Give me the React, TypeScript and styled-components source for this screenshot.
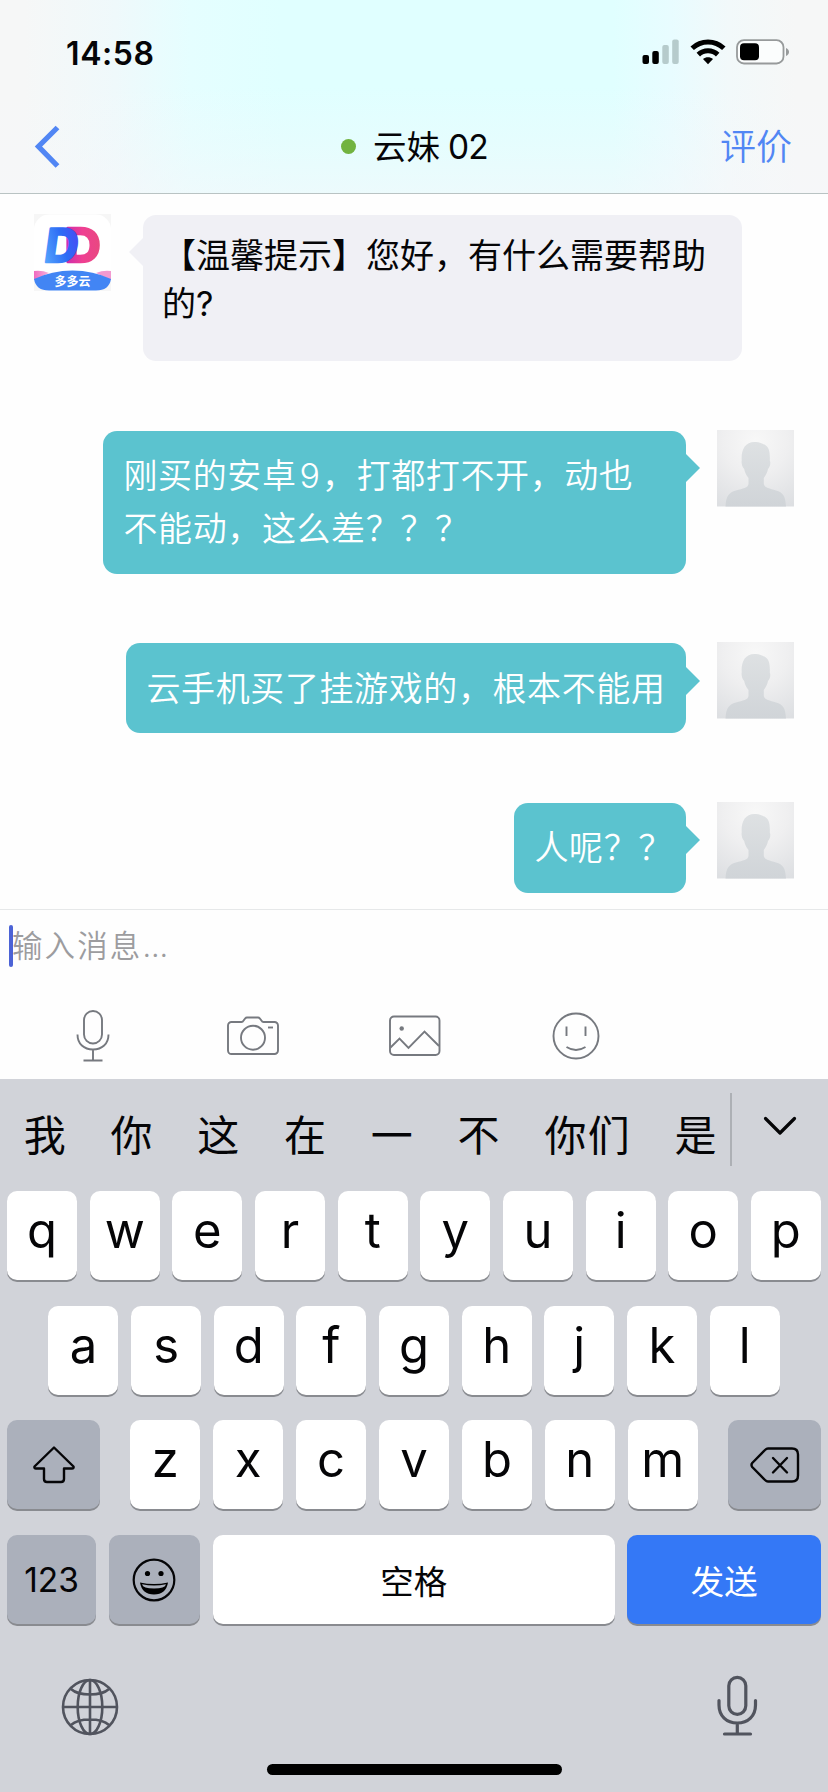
import React from 'react';
import styled, { createGlobalStyle, css } from 'styled-components';

const Global = createGlobalStyle`
  * { box-sizing: border-box; }
  html, body { margin: 0; padding: 0; background: #fff; }
  body { font-family: Inter, "Noto Sans CJK SC", sans-serif; color: #050507; }
  svg { display: block; }
`;

const Screen = styled.div`
  width: 828px;
  height: 1792px;
  overflow: hidden;
  display: flex;
  flex-direction: column;
  background: #fefefe;
`;

/* ---------- header ---------- */

const Header = styled.header`
  flex: none;
  height: 194px;
  border-bottom: 1px solid #b9c3c3;
  background:
    linear-gradient(to bottom, rgba(246, 247, 250, 0) 45%, rgba(246, 247, 250, 0.25) 75%, rgba(246, 247, 250, 0.55) 100%),
    linear-gradient(to right, #f6f7f7 3%, #eff9fb 14%, #e5feff 23%, #e0ffff 34%, #e0ffff 74%, #e8fcff 81%, #f2f9fa 88%, #f6f7f7 96%);
`;

const StatusBar = styled.div`
  height: 100px;
  padding: 0 38px 0 66px;
  display: flex;
  align-items: center;
  justify-content: space-between;
`;

const Clock = styled.span`
  font-size: 32px;
  font-weight: 600;
  line-height: 40px;
  padding-top: 7px;
  letter-spacing: 0.6px;
`;

const StatusIcons = styled.div`
  display: flex;
  align-items: center;
  gap: 10px;
  padding-top: 4px;
`;

const NavBar = styled.div`
  height: 93px;
  padding: 0 36px 0 34px;
  display: grid;
  grid-template-columns: 120px 1fr 120px;
  align-items: center;
`;

const Title = styled.h1`
  margin: 0;
  display: flex;
  align-items: center;
  justify-content: center;
  gap: 17px;
  font-size: 33.5px;
  font-weight: 400;
  line-height: 44px;
  padding-left: 3px;
`;

const TitleText = styled.span`
  word-spacing: -1.5px;
`;

const TitleNum = styled.span`
  letter-spacing: -0.8px;
`;

const OnlineDot = styled.i`
  width: 15px;
  height: 15px;
  border-radius: 50%;
  background: #72b340;
`;

const RateLink = styled.span`
  justify-self: end;
  font-size: 36px;
  font-weight: 350;
  line-height: 44px;
  color: #5186f4;
`;

/* ---------- conversation ---------- */

const Chat = styled.main`
  flex: none;
  height: 715px;
  padding: 21px 34px 0;
  display: flex;
  flex-direction: column;
  gap: 69.5px;
  overflow: hidden;
`;

const Row = styled.div<{ $mine?: boolean }>`
  display: flex;
  flex: none;
  align-items: flex-start;
  gap: ${p => (p.$mine ? '31px' : '32px')};
  justify-content: ${p => (p.$mine ? 'flex-end' : 'flex-start')};
`;

const AvatarBox = styled.div`
  width: 77px;
  height: 77px;
  margin-top: -1px;
  flex: none;
`;

const Bubble = styled.div<{ $mine?: boolean; $w: number }>`
  position: relative;
  width: ${p => p.$w}px;
  white-space: pre;
  font-size: 34px;
  &::after {
    content: '';
    position: absolute;
    border: 14px solid transparent;
  }
  ${p =>
    p.$mine
      ? css`
          padding: 18.5px 20.5px;
          border-radius: 14px;
          background: #5bc3cf;
          color: #fff;
          font-weight: 350;
          letter-spacing: 0.6px;
          line-height: 53px;
          &::after {
            left: 100%;
            top: 23.5px;
            border-left-color: #5bc3cf;
            border-right-width: 0;
          }
        `
      : css`
          height: 146px;
          padding: 17px 19px;
          border-radius: 13px;
          background: #f0f0f5;
          line-height: 48px;
          &::after {
            right: 100%;
            top: 23px;
            border-right-color: #f0f0f5;
            border-left-width: 0;
          }
        `}
`;

const Num = styled.span`
  margin: 0 1.5px 0 3px;
`;

/* ---------- composer ---------- */

const Composer = styled.section`
  flex: none;
  height: 170px;
  border-top: 1.5px solid #e6e8e9;
  display: flex;
  flex-direction: column;
`;

const InputLine = styled.div`
  flex: none;
  height: 72px;
  padding-left: 9px;
  display: flex;
  align-items: center;
`;

const Caret = styled.i`
  width: 4px;
  height: 42px;
  border-radius: 2px;
  background: #4c63d6;
`;

const Placeholder = styled.span`
  font-size: 30.5px;
  font-weight: 350;
  letter-spacing: 2.1px;
  line-height: 42px;
  color: #9c9c9f;
  margin-left: -1px;
`;

const Dots = styled.span`
  letter-spacing: 0;
`;

const Tools = styled.div`
  flex: 1;
  display: grid;
  grid-template-columns: repeat(5, 161px);
  padding: 11px 0 0 12px;
  align-items: center;
  justify-items: center;
`;

/* ---------- keyboard ---------- */

const Keyboard = styled.section`
  flex: 1;
  background: #d1d3d9;
  display: flex;
  flex-direction: column;
`;

const Candidates = styled.div`
  height: 112px;
  display: flex;
  align-items: center;
`;

const CandidateList = styled.div`
  flex: none;
  width: 730px;
  padding: 2px 0 0 2px;
  display: flex;
`;

const Candidate = styled.span`
  flex: none;
  white-space: nowrap;
  padding: 0 21.7px;
  font-size: 42px;
  letter-spacing: 1.4px;
  line-height: 56px;
`;

const Divider = styled.i`
  width: 2px;
  height: 73px;
  margin-top: -12px;
  background: #adb0b5;
`;

const Expand = styled.div`
  flex: 1;
  display: flex;
  justify-content: center;
  padding-bottom: 18px;
`;

const Keys = styled.div`
  display: flex;
  flex-direction: column;
  gap: 25.7px;
  padding: 0 7px;
`;

const KeyRow = styled.div<{ $split?: boolean }>`
  display: flex;
  justify-content: ${p => (p.$split ? 'space-between' : 'center')};
  gap: 12.65px;
`;

const KeyGroup = styled.div`
  display: flex;
  gap: 12.9px;
`;

type Tone = 'light' | 'dark' | 'send';
const toneColor: Record<Tone, string> = { light: '#fff', dark: '#abb0bb', send: '#3478f6' };

const Key = styled.div<{ $w?: number; $tone?: Tone; $small?: boolean }>`
  width: ${p => p.$w ?? 70}px;
  height: 89px;
  border-radius: 10px;
  background: ${p => toneColor[p.$tone ?? 'light']};
  color: ${p => (p.$tone === 'send' ? '#fff' : '#050507')};
  box-shadow: 0 2px 0 #898b90;
  display: flex;
  align-items: center;
  justify-content: center;
  font-size: ${p => (p.$small ? 33.5 : 49)}px;
  line-height: 60px;
  padding-bottom: ${p => (p.$small ? 0 : 9)}px;
`;

const KeyLabel = styled.span`
  padding-top: 4px;
`;

const BottomBar = styled.div`
  height: 136px;
  padding: 51px 70px 0 61px;
  display: flex;
  align-items: flex-start;
  justify-content: space-between;
`;

const GlobeSlot = styled.div`
  padding-top: 3px;
`;

const HomeIndicator = styled.div`
  width: 295px;
  height: 11px;
  border-radius: 6px;
  background: #000;
  margin: 4px 0 0 267px;
`;

/* ---------- drawings ---------- */

const Signal = () => (
  <svg width="38" height="26" viewBox="0 0 38 26">
    <rect x="0.5" y="16" width="6.5" height="9" rx="2" />
    <rect x="10.3" y="12" width="6.5" height="13" rx="2" />
    <rect x="20.3" y="6" width="6.5" height="19" rx="2" fill="#b6cbcc" />
    <rect x="30.2" y="0.5" width="6.5" height="24.5" rx="2" fill="#b6cbcc" />
  </svg>
);

const Wifi = () => (
  <svg width="36" height="26" viewBox="0 0 36 26" fill="none" stroke="#000" strokeWidth="5">
    <path d="M2.2 9.2a23 23 0 0 1 31.6 0" />
    <path d="M8.3 15.6a14 14 0 0 1 19.4 0" />
    <path d="M18 25.2l-5-5.2c2.8-2.5 7.2-2.5 10 0z" fill="#000" stroke="none" />
  </svg>
);

const Battery = () => (
  <svg width="54" height="26" viewBox="0 0 54 26">
    <rect x="1" y="1.2" width="46.5" height="23.3" rx="7" fill="#fbfdfd" stroke="#979a9b" strokeWidth="1.8" />
    <rect x="4" y="4.2" width="19" height="17" rx="4" />
    <path d="M50 9c4 1.5 4 6.5 0 8z" fill="#979a9b" />
  </svg>
);

const Back = () => (
  <svg width="27" height="44" viewBox="0 0 27 44" fill="none" stroke="#5186f4" strokeWidth="5.3">
    <path d="M23.5 2.5L4.5 21.5 23.5 41" />
  </svg>
);

const BrandAvatar = () => (
  <svg width="77" height="77" viewBox="0 0 77 77">
    <defs>
      <linearGradient id="blueD" x1="0" y1="1" x2="1" y2="0.3">
        <stop offset="0" stopColor="#5fb4ff" />
        <stop offset="0.6" stopColor="#2d6cf5" />
        <stop offset="1" stopColor="#4a48f5" />
      </linearGradient>
      <linearGradient id="pinkD" x1="0" y1="0" x2="1" y2="0">
        <stop offset="0" stopColor="#c92bb0" />
        <stop offset="0.5" stopColor="#ef3f92" />
        <stop offset="1" stopColor="#e8497f" />
      </linearGradient>
      <linearGradient id="flap" x1="0" y1="0" x2="1" y2="0">
        <stop offset="0" stopColor="#f06ac0" />
        <stop offset="1" stopColor="#f7b3dc" />
      </linearGradient>
    </defs>
    <rect width="77" height="77" fill="#f6f6f6" />
    <rect y="0.5" width="77" height="76.5" rx="15" fill="#fff" />
    <g fontFamily="Inter" fontWeight="700" fontSize="46" strokeWidth="2.6" strokeLinejoin="round">
      <text transform="translate(30.4 47.5) scale(1.09 1)" fill="url(#pinkD)" stroke="url(#pinkD)">D</text>
      <text transform="translate(9 47.5) skewX(-8)" fill="url(#blueD)" stroke="url(#blueD)">D</text>
    </g>
    <path d="M0 57q8-1 15 2L0 66z" fill="url(#flap)" />
    <path d="M77 57q-8-1-15 2l15 7z" fill="#f39ad0" />
    <path d="M0 65Q18 56.5 38.5 56.5T77 65Q75 76.5 62 76.5H15Q2 76.5 0 65z" fill="#4285f4" />
    <text x="38.5" y="71.5" textAnchor="middle" fontFamily="Noto Sans CJK SC" fontWeight="700" fontSize="12" fill="#fff">多多云</text>
  </svg>
);

const UserAvatar = () => (
  <svg width="77" height="77" viewBox="0 0 77 77">
    <defs>
      <radialGradient id="userBg" cx="0.5" cy="0.15" r="0.95">
        <stop offset="0" stopColor="#f8f8f8" />
        <stop offset="0.45" stopColor="#efeff0" />
        <stop offset="1" stopColor="#dddfe2" />
      </radialGradient>
      <linearGradient id="userFg" x1="0" y1="0" x2="0" y2="1">
        <stop offset="0" stopColor="#dee1e3" />
        <stop offset="1" stopColor="#d0d4d8" />
      </linearGradient>
    </defs>
    <rect width="77" height="76.5" fill="url(#userBg)" />
    <path
      d="M8.5 76.5C9 66 12 62.5 19 60.5C26 58.5 31 58 31.5 54V48C29 45 27.8 42 27.2 39C25 37 24.2 33 24.7 30.5C24 20 28 12 37.5 12C42 11.5 46 14 47.5 14.5C52 17 53.2 22 52.8 30.5C54 33 53 37 51 39C50.5 42 49 45 46.8 48V54C47.5 58 53 58.5 59 60.5C66 62.5 68.5 66 69 76.5z"
      fill="url(#userFg)"
    />
  </svg>
);

const ToolMic = () => (
  <svg width="34" height="52" viewBox="0 0 34 52" fill="none" stroke="#76797f" strokeWidth="1.9">
    <rect x="8" y="1" width="18" height="32.5" rx="9" />
    <path d="M1.5 24.5C1.5 34 8 39.5 17 39.5S32.5 34 32.5 24.5M17 39.5V50.5M7.5 50.5H26.5" />
  </svg>
);

const ToolCamera = () => (
  <svg width="54" height="40" viewBox="0 0 54 40" fill="none" stroke="#76797f" strokeWidth="1.9">
    <path d="M4.5 6H14.5C17 6 17 1.5 20 1.5H31C34 1.5 34 6 36.5 6H47.5A3.5 3.5 0 0 1 51 9.5V34.5A3.5 3.5 0 0 1 47.5 38H4.5A3.5 3.5 0 0 1 1 34.5V9.5A3.5 3.5 0 0 1 4.5 6z" />
    <circle cx="26" cy="21.7" r="12" />
    <path d="M41 11.5H46" />
  </svg>
);

const ToolImage = () => (
  <svg width="52" height="42" viewBox="0 0 52 42" fill="none" stroke="#76797f" strokeWidth="1.9">
    <rect x="1" y="1.5" width="49.5" height="38.5" rx="4" />
    <circle cx="12.7" cy="13.5" r="2.2" fill="#76797f" stroke="none" />
    <path d="M1.5 32.5L10.5 23.5L19.5 33L35.5 16.5L50 31" />
  </svg>
);

const ToolFace = () => (
  <svg width="48" height="48" viewBox="0 0 48 48" fill="none" stroke="#76797f" strokeWidth="1.9">
    <circle cx="24" cy="24" r="22.5" />
    <path d="M14.5 14.5V24M33.5 14.5V24M14.5 35Q24 41 33.5 35" />
  </svg>
);

const ChevronDown = () => (
  <svg width="34" height="20" viewBox="0 0 34 20" fill="none" stroke="#050507" strokeWidth="3.2" strokeLinecap="round" strokeLinejoin="round">
    <path d="M2.5 2.5L17 17L31.5 2.5" />
  </svg>
);

const Shift = () => (
  <svg width="42" height="38" viewBox="0 0 42 38" fill="none" stroke="#050507" strokeWidth="2.4" strokeLinejoin="round">
    <path d="M21 1.5L40.5 20.5Q41 22.5 39 22.5H31V33Q31 36 28 36H14Q11 36 11 33V22.5H3Q1 22.5 1.5 20.5z" />
  </svg>
);

const Backspace = () => (
  <svg width="50" height="36" viewBox="0 0 50 36" fill="none" stroke="#050507" strokeWidth="2.4" strokeLinejoin="round" strokeLinecap="round">
    <path d="M18 1.5H42Q48 1.5 48 7.5V28.5Q48 34.5 42 34.5H18Q16.5 34.5 15 33L2.2 20Q.8 18 2.2 16L15 3Q16.5 1.5 18 1.5z" />
    <path d="M23 11L37 25.5M37 11L23 25.5" />
  </svg>
);

const Grin = () => (
  <svg width="44" height="44" viewBox="0 0 44 44">
    <circle cx="22" cy="22" r="20.3" fill="none" stroke="#050507" strokeWidth="2.2" />
    <circle cx="15.5" cy="15.5" r="2.6" />
    <circle cx="29" cy="15.5" r="2.6" />
    <path d="M8 24.5Q22 27.5 36 24.5Q34 36.5 22 36.5T8 24.5z" />
    <path d="M10 26.2Q22 29 34 26.2Q33 30.5 22 30.5T10 26.2z" fill="#abb0bb" />
  </svg>
);

const Globe = () => (
  <svg width="58" height="58" viewBox="0 0 58 58" fill="none" stroke="#51545e" strokeWidth="2.6">
    <circle cx="29" cy="29" r="27" />
    <ellipse cx="29" cy="29" rx="12.3" ry="27" />
    <path d="M29 2V56M2 29H56M10 11Q16 16.5 29 16.5T48 11M10 47Q16 41.5 29 41.5T48 47" />
  </svg>
);

const DictateMic = () => (
  <svg width="42" height="62" viewBox="0 0 42 62" fill="none" stroke="#51545e" strokeWidth="3.2" strokeLinecap="round">
    <rect x="12.8" y="2.3" width="17" height="37" rx="8.5" />
    <path d="M3 25.5V30C3 41 10.5 48 21.3 48S39.5 41 39.5 30V25.5M21.3 48V59M8.5 59H34.5" />
  </svg>
);

/* ---------- data ---------- */

const candidates = ['我', '你', '这', '在', '一', '不', '你们', '是'];
const mine: { width: number; text: React.ReactNode }[] = [
  { width: 583, text: <>刚买的安卓<Num>9</Num>，打都打不开，动也{'\n'}不能动，这么差？？？</> },
  { width: 560, text: '云手机买了挂游戏的，根本不能用' },
  { width: 172, text: '人呢？？' },
];

export default function App() {
  return (
    <Screen lang="zh-CN">
      <Global />
      <Header>
        <StatusBar>
          <Clock>14:58</Clock>
          <StatusIcons>
            <Signal />
            <Wifi />
            <Battery />
          </StatusIcons>
        </StatusBar>
        <NavBar>
          <Back />
          <Title>
            <OnlineDot />
            <TitleText>云妹 <TitleNum>02</TitleNum></TitleText>
          </Title>
          <RateLink>评价</RateLink>
        </NavBar>
      </Header>

      <Chat>
        <Row>
          <AvatarBox><BrandAvatar /></AvatarBox>
          <Bubble $w={599}>{'【温馨提示】您好，有什么需要帮助\n的?'}</Bubble>
        </Row>
        {mine.map((m, i) => (
          <Row $mine key={i}>
            <Bubble $mine $w={m.width}>{m.text}</Bubble>
            <AvatarBox><UserAvatar /></AvatarBox>
          </Row>
        ))}
      </Chat>

      <Composer>
        <InputLine>
          <Caret />
          <Placeholder>输入消息<Dots>...</Dots></Placeholder>
        </InputLine>
        <Tools>
          <ToolMic />
          <ToolCamera />
          <ToolImage />
          <ToolFace />
        </Tools>
      </Composer>

      <Keyboard>
        <Candidates>
          <CandidateList>
            {candidates.map(c => <Candidate key={c}>{c}</Candidate>)}
          </CandidateList>
          <Divider />
          <Expand><ChevronDown /></Expand>
        </Candidates>
        <Keys>
          <KeyRow>{[...'qwertyuiop'].map(k => <Key key={k}>{k}</Key>)}</KeyRow>
          <KeyRow>{[...'asdfghjkl'].map(k => <Key key={k}>{k}</Key>)}</KeyRow>
          <KeyRow $split>
            <Key $w={93} $tone="dark" $small><Shift /></Key>
            <KeyGroup>{[...'zxcvbnm'].map(k => <Key key={k}>{k}</Key>)}</KeyGroup>
            <Key $w={93} $tone="dark" $small><Backspace /></Key>
          </KeyRow>
          <KeyRow $split>
            <Key $w={89} $tone="dark" $small>123</Key>
            <Key $w={91} $tone="dark" $small><Grin /></Key>
            <Key $w={402} $small><KeyLabel>空格</KeyLabel></Key>
            <Key $w={193.5} $tone="send" $small><KeyLabel>发送</KeyLabel></Key>
          </KeyRow>
        </Keys>
        <BottomBar>
          <GlobeSlot><Globe /></GlobeSlot>
          <DictateMic />
        </BottomBar>
        <HomeIndicator />
      </Keyboard>
    </Screen>
  );
}
